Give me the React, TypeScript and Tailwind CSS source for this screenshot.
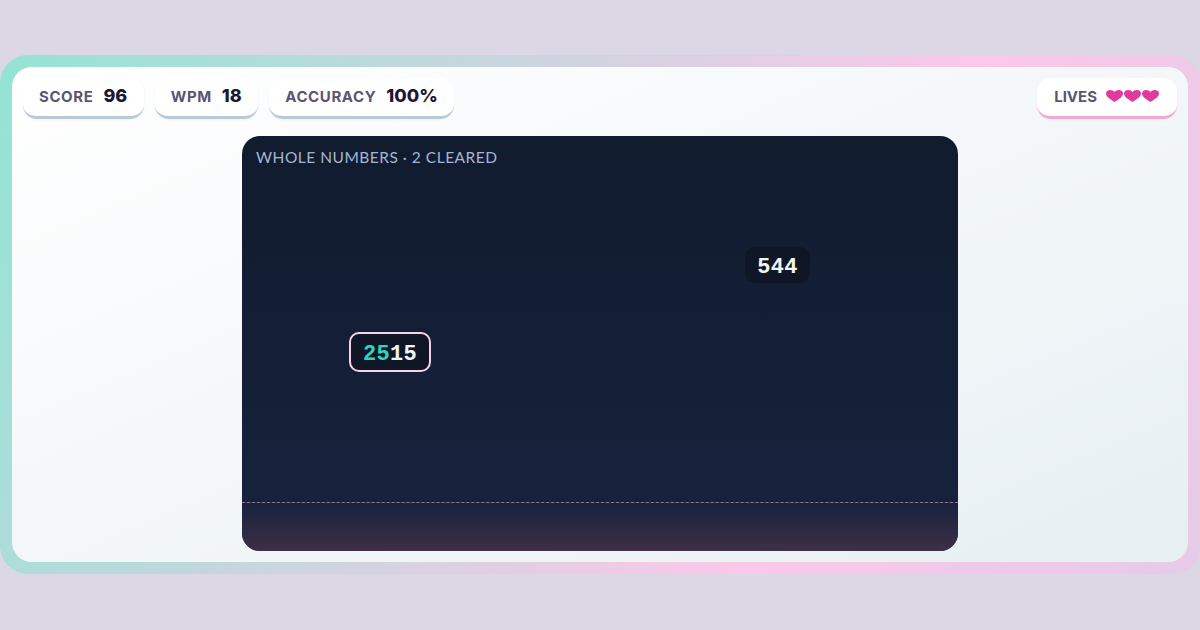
import React from "react";

function Stat({ label, value }: { label: string; value: string }) {
  return (
    <div className="h-[41px] flex items-baseline gap-[10px] pl-4 pr-[16.5px] pt-[6px] rounded-[14px] bg-white border-b-[3px] border-[#b9cad4] shadow-[0_1px_2px_rgba(30,40,70,0.05)]">
      <span className="font-['Inter',sans-serif] text-[15px] leading-[24px] font-bold tracking-[0.6px] text-[#5a5573]">{label}</span>
      <span className="font-['Inter',sans-serif] text-[18px] leading-[24px] font-extrabold text-[#1c1733]">{value}</span>
    </div>
  );
}

function Heart() {
  return (
    <svg viewBox="0 0 34 24" className="w-[17px] h-[12px] fill-[#e0399f]">
      <path d="M17 24C12 20 0 15 0 7C0 2.8 3.6 0 8 0C12 0 15.4 1.6 17 4C18.6 1.6 22 0 26 0C30.4 0 34 2.8 34 7C34 15 22 20 17 24Z" />
    </svg>
  );
}

export default function App() {
  return (
    <div className="w-[1200px] h-[630px] bg-[#dcd7e4] flex flex-col justify-center overflow-hidden">
      {/* Frame */}
      <div className="h-[519px] mb-[1px] p-3 rounded-[28px] bg-[linear-gradient(115deg,#93e4d4_0%,#fbc8e8_68%,#e6cbe8_100%)]">
        <div className="h-full px-[11px] pt-[11px] rounded-[20px] bg-gradient-to-br from-white to-[#e7eff3] flex flex-col">
          {/* HUD */}
          <div className="flex items-center gap-[11px]">
            <Stat label="SCORE" value="96" />
            <Stat label="WPM" value="18" />
            <Stat label="ACCURACY" value="100%" />
            <div className="ml-auto h-[41px] flex items-center gap-[9px] pl-[17px] pr-[18px] pb-[1px] rounded-[14px] bg-white border-b-[3px] border-[#f2a9d2] shadow-[0_1px_2px_rgba(30,40,70,0.05)]">
              <span className="font-['Inter',sans-serif] text-[15px] leading-[24px] font-bold text-[#5a5573]">LIVES</span>
              <div className="flex gap-[1px] mb-[1px]">
                <Heart />
                <Heart />
                <Heart />
              </div>
            </div>
          </div>

          {/* Arena */}
          <div className="relative mt-[17px] mx-auto w-[716px] h-[415px] rounded-[18px] overflow-hidden bg-gradient-to-b from-[#111b2e] to-[#17223e]">
            <div className="px-[14px] pt-[12px] font-['Lato',sans-serif] text-[15.5px] leading-[19px] tracking-[0.5px] text-[#a5b6d4]">
              WHOLE NUMBERS · 2 CLEARED
            </div>

            <div className="absolute left-[503px] top-[111px] h-[36px] w-[65px] pt-[4px] flex items-center justify-center rounded-[10px] bg-[#0f1726] font-['Liberation_Mono',monospace] text-[22px] tracking-[0.3px] font-bold text-[#f1f5f9]">
              544
            </div>

            <div className="absolute left-[107px] top-[196px] h-[40px] w-[82px] pt-[4px] flex items-center justify-center rounded-[10px] border-2 border-[#f7d0ea] bg-[#0f1726] font-['Liberation_Mono',monospace] text-[22px] tracking-[0.3px] font-bold text-[#f1f5f9]">
              <span className="text-[#2dd4bf]">25</span>15
            </div>

            {/* Danger zone */}
            <div className="absolute left-0 right-0 bottom-0 h-[49px] border-t border-dashed border-[#85758f] bg-gradient-to-b from-[#17223e] to-[#3d2f46]" />
          </div>
        </div>
      </div>
    </div>
  );
}
